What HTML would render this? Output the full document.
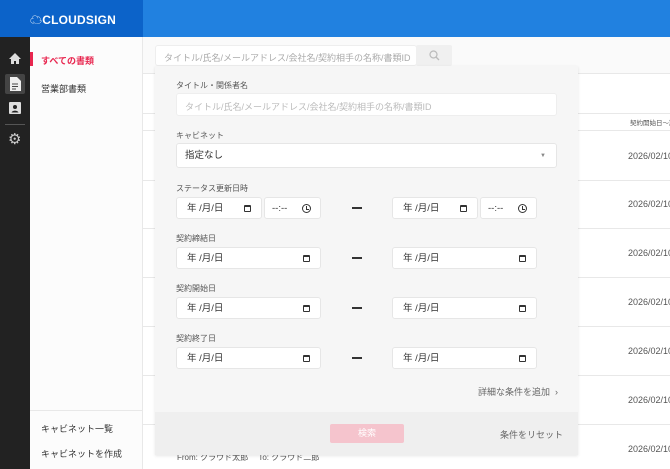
<!DOCTYPE html><html><head><meta charset="utf-8"><style>
*{box-sizing:border-box;margin:0;padding:0}
body{width:670px;height:469px;overflow:hidden;font-family:"Liberation Sans","Noto Sans CJK JP",sans-serif;background:#fff;position:relative;color:#333}
.a{position:absolute;white-space:nowrap}
.inp{position:absolute;background:#fff;border:1px solid #e6e6e6;border-radius:3px;font-size:9.5px;color:#333;white-space:nowrap}
.lbl{position:absolute;font-size:8px;color:#555;left:176px;white-space:nowrap}
.dt{padding-left:10px;padding-top:1px;line-height:20px}
.cal{position:absolute;right:10px;top:7px;width:7px;height:7px;border:1.3px solid #333;border-top-width:2.3px;border-radius:1px}
.clk{position:absolute;right:9px;top:6px;width:9px;height:9px;border:1.3px solid #333;border-radius:50%}
.clk:after{content:"";position:absolute;left:2.5px;top:1px;width:2px;height:2.5px;border-left:1px solid #333;border-bottom:1px solid #333}
.dash{position:absolute;left:352px;width:10px;height:1.5px;background:#333}
.row{position:absolute;left:143px;right:0;height:1px;background:#e8e8e8}
.date{position:absolute;left:628px;font-size:9px;color:#555;white-space:nowrap}
</style></head><body>
<div class="a" style="left:0;top:0;width:143px;height:37px;background:#0c63c9"></div>
<div class="a" style="left:143px;top:0;right:0;height:37px;background:#2181e0"></div>
<div class="a" style="left:30px;top:11px;color:#fff;font-weight:bold;font-size:12px;letter-spacing:0.2px"><span style="font-size:12px">☁</span>CLOUDSIGN</div>
<div class="a" style="left:0;top:37px;width:30px;bottom:0;background:#222"></div>
<div class="a" style="left:5px;top:74px;width:20px;height:20px;background:#444;border-radius:2px"></div>
<svg class="a" style="left:8px;top:52px" width="14" height="13" viewBox="0 0 14 13"><path d="M7 1L1 7h2v5h3V9h2v3h3V7h2z" fill="#ddd"/></svg>
<svg class="a" style="left:9px;top:77px" width="12" height="14" viewBox="0 0 12 14"><path d="M1 0h7l4 4v10H1z" fill="#eee"/><path d="M3 7h6M3 9.5h6M3 12h4" stroke="#444" stroke-width="1"/></svg>
<svg class="a" style="left:9px;top:102px" width="12" height="12" viewBox="0 0 12 12"><rect width="12" height="12" rx="1" fill="#ddd"/><circle cx="6" cy="5" r="2" fill="#222"/><path d="M2.5 10.5c1-2.5 6-2.5 7 0z" fill="#222"/></svg>
<div class="a" style="left:5px;top:124px;width:20px;height:1px;background:#555"></div>
<div class="a" style="left:8px;top:130px;color:#ccc;font-size:15px">⚙</div>
<div class="a" style="left:30px;top:37px;width:113px;bottom:0;background:#fcfcfc;border-right:1px solid #e8e8e8"></div>
<div class="a" style="left:30px;top:52px;width:3px;height:14px;background:#e8264f"></div>
<div class="a" style="left:41px;top:54px;font-size:9px;color:#e8264f;font-weight:bold">すべての書類</div>
<div class="a" style="left:41px;top:82px;font-size:9px;color:#333">営業部書類</div>
<div class="a" style="left:30px;top:410px;width:113px;height:1px;background:#e8e8e8"></div>
<div class="a" style="left:41px;top:422px;font-size:9px">キャビネット一覧</div>
<div class="a" style="left:41px;top:447px;font-size:9px">キャビネットを作成</div>
<div class="a" style="left:143px;top:37px;right:0;height:36px;background:#fafafa"></div>
<div class="row" style="top:73px"></div><div class="row" style="top:113px"></div><div class="row" style="top:130px"></div>
<div class="row" style="top:180px"></div><div class="row" style="top:228px"></div><div class="row" style="top:277px"></div><div class="row" style="top:326px"></div><div class="row" style="top:375px"></div><div class="row" style="top:424px"></div>
<div class="a" style="left:630px;top:117px;font-size:6.5px;color:#555">契約開始日〜期</div>
<div class="date" style="top:151px">2026/02/10</div><div class="date" style="top:199px">2026/02/10</div><div class="date" style="top:248px">2026/02/10</div><div class="date" style="top:297px">2026/02/10</div><div class="date" style="top:346px">2026/02/10</div><div class="date" style="top:395px">2026/02/10</div><div class="date" style="top:444px">2026/02/10</div>
<div class="a" style="left:177px;top:452px;font-size:8px;color:#555">From: クラウド太郎　 To: クラウド二郎</div>
<div class="inp" style="left:155px;top:45px;width:262px;height:21px;border-color:#eee;color:#aaa;font-size:9px;padding:5px 8px;overflow:hidden">タイトル/氏名/メールアドレス/会社名/契約相手の名称/書類ID</div>
<div class="a" style="left:416px;top:45px;width:36px;height:21px;background:#f0f0f0;border-radius:2px"></div>
<svg class="a" style="left:429px;top:50px" width="11" height="11" viewBox="0 0 11 11"><circle cx="4.5" cy="4.5" r="3.5" fill="none" stroke="#bbb" stroke-width="1.2"/><path d="M7 7l3 3" stroke="#bbb" stroke-width="1.3"/></svg>
<div class="a" style="left:155px;top:66px;width:423px;height:389px;background:#f6f6f6;box-shadow:0 1px 3px rgba(0,0,0,.1)"></div>
<div class="a" style="left:155px;top:412px;width:423px;height:43px;background:#efefef"></div>
<div class="lbl" style="top:80px">タイトル・関係者名</div>
<div class="inp" style="left:176px;top:93px;width:381px;height:23px;border-color:#eee;color:#bbb;font-size:9px;padding:6px 8px">タイトル/氏名/メールアドレス/会社名/契約相手の名称/書類ID</div>
<div class="lbl" style="top:130px">キャビネット</div>
<div class="inp" style="left:176px;top:143px;width:381px;height:25px;padding:0 8px;line-height:23px">指定なし<span style="position:absolute;right:10px;top:1px;color:#888;font-size:6px">▼</span></div>
<div class="lbl" style="top:183px">ステータス更新日時</div>
<div class="inp dt" style="left:176px;top:197px;width:86px;height:22px">年 /月/日<i class="cal"></i></div>
<div class="inp dt" style="left:264px;top:197px;width:57px;height:22px;padding-left:7px">--:--<i class="clk"></i></div>
<div class="dash" style="top:207px"></div>
<div class="inp dt" style="left:392px;top:197px;width:86px;height:22px">年 /月/日<i class="cal"></i></div>
<div class="inp dt" style="left:480px;top:197px;width:57px;height:22px;padding-left:7px">--:--<i class="clk"></i></div>
<div class="lbl" style="top:233px">契約締結日</div>
<div class="inp dt" style="left:176px;top:247px;width:145px;height:22px">年 /月/日<i class="cal"></i></div>
<div class="dash" style="top:257px"></div>
<div class="inp dt" style="left:392px;top:247px;width:145px;height:22px">年 /月/日<i class="cal"></i></div>
<div class="lbl" style="top:283px">契約開始日</div>
<div class="inp dt" style="left:176px;top:297px;width:145px;height:22px">年 /月/日<i class="cal"></i></div>
<div class="dash" style="top:307px"></div>
<div class="inp dt" style="left:392px;top:297px;width:145px;height:22px">年 /月/日<i class="cal"></i></div>
<div class="lbl" style="top:333px">契約終了日</div>
<div class="inp dt" style="left:176px;top:347px;width:145px;height:22px">年 /月/日<i class="cal"></i></div>
<div class="dash" style="top:357px"></div>
<div class="inp dt" style="left:392px;top:347px;width:145px;height:22px">年 /月/日<i class="cal"></i></div>
<div class="a" style="left:478px;top:385px;font-size:9px;color:#666">詳細な条件を追加 &nbsp;›</div>
<div class="a" style="left:330px;top:424px;width:74px;height:19px;background:#f5c4cd;border-radius:2px;color:#fff;font-size:9px;text-align:center;line-height:19px">検索</div>
<div class="a" style="left:500px;top:428px;font-size:9px;color:#666">条件をリセット</div>
</body></html>
